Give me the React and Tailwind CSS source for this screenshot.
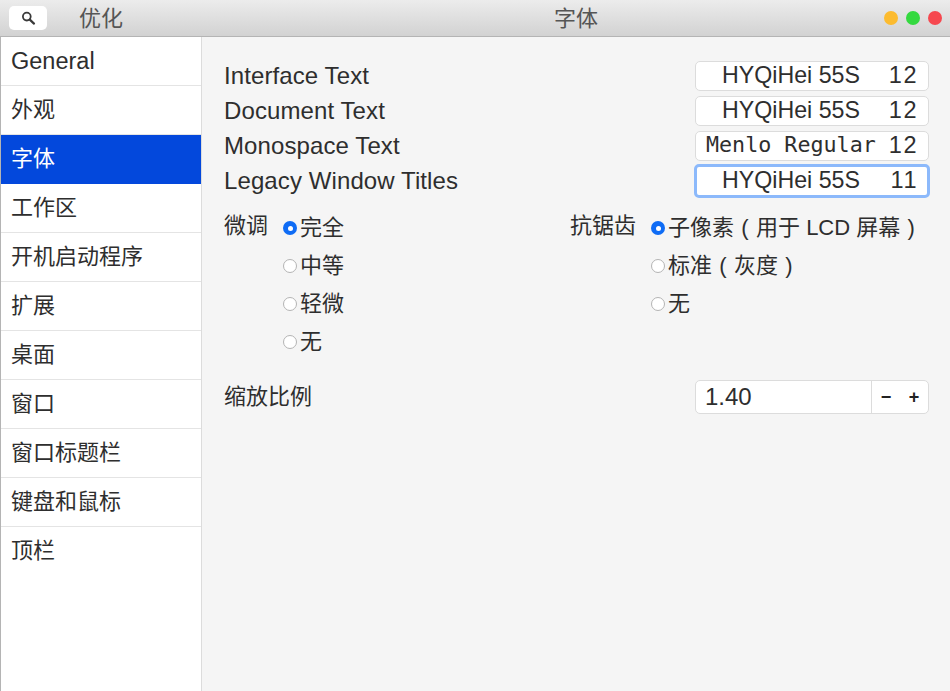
const sans = { fontFamily: '"Liberation Sans", "Noto Sans CJK SC", sans-serif' };

const items = ["General", "外观", "字体", "工作区", "开机启动程序", "扩展", "桌面", "窗口", "窗口标题栏", "键盘和鼠标", "顶栏"];

function SearchIcon() {
  return (
    <svg width="16" height="16" viewBox="0 0 16 16" fill="none" stroke="#3a3a3a">
      <circle cx="6.8" cy="6.6" r="3.9" strokeWidth="1.8" />
      <path d="M9.8 9.6 L14 13.6" strokeWidth="2.2" strokeLinecap="round" />
    </svg>
  );
}

// brackets sit centred in a full-width cell in the reference
function Paren({ children }) {
  return <span className="inline-block w-[22px] text-center">{children}</span>;
}

function FontRow({ label, font, size, mono, focused }) {
  return (
    <div className="flex h-[35px] items-center justify-between">
      <span className="text-[24px] tracking-[0.1px]">{label}</span>
      {focused ? (
        <div className="-mx-px flex h-[34px] w-[236px] shrink-0 items-center justify-between rounded-[5px] border-[3px] border-[#8cb9fb] bg-white pl-[25px] pr-[9px]">
          <span className="text-[23.2px]">{font}</span>
          <span className="text-[23.5px] tracking-[1.5px]">{size}</span>
        </div>
      ) : (
        <div className={`flex h-[30px] w-[234px] shrink-0 items-center justify-between rounded-[5px] border border-[#dcdcdc] bg-white ${mono ? "pl-[10px]" : "pl-[26px]"} pr-[10px]`}>
          <span className={mono ? "font-['DejaVu_Sans_Mono'] text-[21.7px]" : "text-[23.2px]"}>{font}</span>
          <span className="text-[23.5px] tracking-[1.5px]">{size}</span>
        </div>
      )}
    </div>
  );
}

function Radio({ label, checked }) {
  return (
    <div className="flex h-[38px] items-center">
      {checked ? (
        <span className="mr-[3px] flex h-[14px] w-[14px] items-center justify-center rounded-full bg-[#0f6cf5]">
          <span className="h-[5px] w-[5px] rounded-full bg-white" />
        </span>
      ) : (
        <span className="mr-[3px] h-[14px] w-[14px] rounded-full border border-[#b4b4b4] bg-white" />
      )}
      <span className="mb-[2px] whitespace-pre">{label}</span>
    </div>
  );
}

export default function App() {
  return (
    <div style={sans} className="flex h-[691px] w-[950px] flex-col overflow-hidden bg-[#f5f5f5] text-[22px] text-[#2e2e2e]">
      {/* Title bar */}
      <div className="flex h-[37px] shrink-0 items-center border-b border-[#b4b4b4] bg-gradient-to-b from-[#ececec] to-[#d2d2d2] text-[#555]">
        <div className="ml-[9px] flex h-[24px] w-[38px] items-center justify-center rounded-[5px] bg-white">
          <SearchIcon />
        </div>
        <span className="ml-[32px]">优化</span>
        <span className="ml-[431px]">字体</span>
        <div className="ml-auto mr-[8px] flex gap-[8px]">
          <span className="h-[14px] w-[14px] rounded-full bg-[#fcbb2f]" />
          <span className="h-[14px] w-[14px] rounded-full bg-[#34d93f]" />
          <span className="h-[14px] w-[14px] rounded-full bg-[#f6484f]" />
        </div>
      </div>

      <div className="flex min-h-0 flex-1">
        {/* Sidebar */}
        <div className="w-[202px] shrink-0 border-x border-r-[#dcdcdc] border-l-[#b4b4b4] bg-white">
          {items.map((item, i) => (
            <div
              key={item}
              className={`flex h-[49px] items-center pl-[10px] ${i === 0 ? "pt-[2px] text-[23.5px]" : "pb-[2px]"} ${i === 2 ? "bg-[#0348dc] text-white" : "border-b border-[#e4e4e4]"} ${i === 10 ? "border-b-0" : ""}`}
            >
              {item}
            </div>
          ))}
        </div>

        {/* Settings */}
        <div className="min-w-0 flex-1 pl-[22px] pr-[21px] pt-[21px]">
          <FontRow label="Interface Text" font="HYQiHei 55S" size="12" />
          <FontRow label="Document Text" font="HYQiHei 55S" size="12" />
          <FontRow label="Monospace Text" font="Menlo Regular" size="12" mono />
          <FontRow label="Legacy Window Titles" font="HYQiHei 55S" size="11" focused />

          <div className="mt-[11px] flex">
            <div className="flex w-[346px]">
              <span className="w-[59px] leading-[34px]">微调</span>
              <div>
                <Radio label="完全" checked />
                <Radio label="中等" />
                <Radio label="轻微" />
                <Radio label="无" />
              </div>
            </div>
            <div className="flex">
              <span className="w-[81px] leading-[34px]">抗锯齿</span>
              <div>
                <Radio
                  label={
                    <>
                      子像素<Paren>(</Paren>用于 LCD 屏幕<Paren>)</Paren>
                    </>
                  }
                  checked
                />
                <Radio
                  label={
                    <>
                      标准<Paren>(</Paren>灰度<Paren>)</Paren>
                    </>
                  }
                />
                <Radio label="无" />
              </div>
            </div>
          </div>

          <div className="mt-[19px] flex items-center justify-between">
            <span className="mb-[1px]">缩放比例</span>
            <div className="flex h-[34px] w-[234px] items-center rounded-[5px] border border-[#dcdcdc] bg-white">
              <span className="flex-1 pl-[9px] text-[24px]">1.40</span>
              <span className="flex h-full w-[29px] items-center justify-center border-l border-[#dcdcdc] text-[18px] font-bold text-[#222]">−</span>
              <span className="flex h-full w-[28px] items-center justify-center text-[18px] font-bold text-[#222]">+</span>
            </div>
          </div>
        </div>
      </div>
    </div>
  );
}
